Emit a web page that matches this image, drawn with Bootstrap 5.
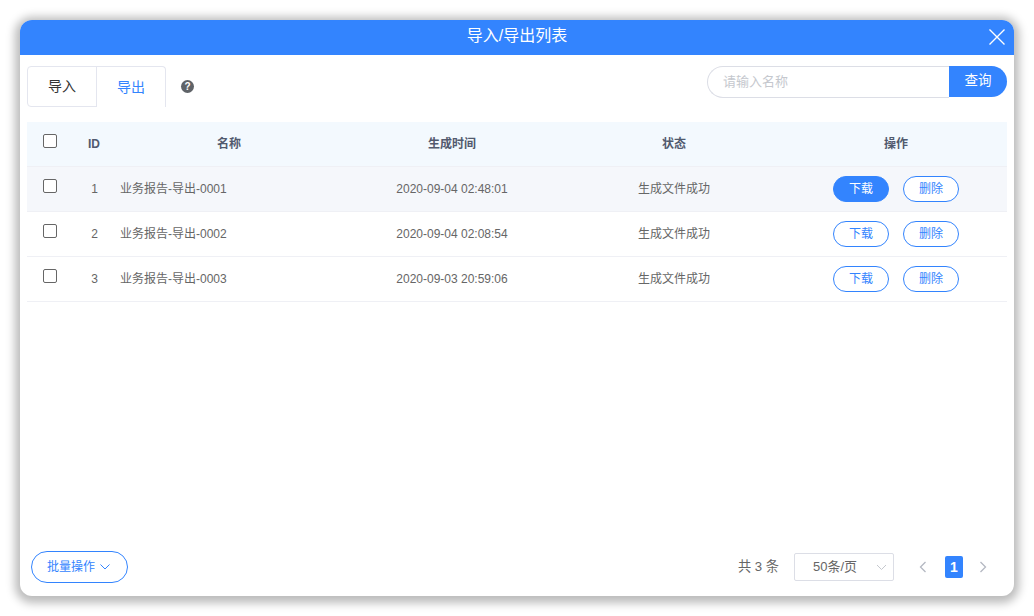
<!DOCTYPE html>
<html lang="zh">
<head>
<meta charset="utf-8">
<title>导入/导出列表</title>
<link rel="stylesheet" href="https://cdn.jsdelivr.net/npm/bootstrap@5.3.0/dist/css/bootstrap.min.css">
<style>
html,body{height:100%;margin:0;background:#fff;overflow:hidden}
body{font-family:"Liberation Sans","Noto Sans CJK SC",sans-serif;padding:20px;color:#666;font-size:12px}
.dlg{width:994px;height:576px;border-radius:12px;background:#fff;box-shadow:0 2px 10px 5px rgba(0,0,0,.27);overflow:hidden}
.dlg-head{height:35px;background:#3384fe;color:#fff;font-size:16px;line-height:32px}
.dlg-x{right:8px;top:8px;width:18px;height:18px;line-height:0}
.dlg-body{padding:11px 7px 13px}
.tabbar{height:41px}
.tabx{width:70px;height:41px;border:1px solid #e4e6ef;background:#fff;color:#333;font-size:14px;display:flex;align-items:center;justify-content:center}
.tabx.t1{border-radius:4px 0 0 4px}
.tabx.t2{margin-left:-1px;border-bottom:0;border-radius:0 4px 0 0;color:#3384fe}
.qmark{width:13px;height:13px;border-radius:50%;background:#5f6368;color:#fff;font-size:10px;font-weight:700;line-height:13px;text-align:center;margin-left:15px}
.srch{width:300px;height:32px;margin-top:0}
.srch-in{width:242px;height:32px;border:1px solid #dcdee6;border-right:0;border-radius:16px 0 0 16px;padding:0 15px 2px;font-size:13px;color:#333;outline:0;background:#fff}
.srch-in::placeholder{color:#c5c8ce}
.srch-btn{width:58px;height:31px;border:0;background:#3384fe;color:#fff;font-size:13.5px;border-radius:0 16px 16px 0;padding:0 0 1px}
.tbl-wrap{margin-top:15px;flex:1}
table.grid{width:980px;table-layout:fixed;border-collapse:collapse;margin:0}
.grid th,.grid td{padding:0;text-align:center;vertical-align:middle;border-bottom:1px solid #eff0f5;font-size:12px}
.grid th{height:44px;background:#f3f9fe;color:#515a6e;font-weight:700}
.grid td{height:45px;color:#666}
.grid tr.hot td{background:#f5f7fb}
.grid td.nm{text-align:left;padding-left:3px}
.grid td.idc{padding-left:1px}
.box{display:block;width:14px;height:14px;margin:0 0 5px 16px;border:1px solid #666;border-radius:2px;background:#fff;appearance:none}
.pill{width:56px;height:26px;padding:0;border:1px solid #3384fe;border-radius:13px;background:#fff;color:#3384fe;font-size:12px;line-height:24px}
.pill.on{background:#3384fe;color:#fff}
.ops{display:flex;justify-content:center;gap:14px;padding-right:0}
.bulk{width:97px;height:32px;margin-left:4px;border:1px solid #3384fe;border-radius:16px;background:#fff;color:#3384fe;font-size:12px;padding:0 1px 0 0}
.sel{width:100px;height:28px;border:1px solid #dcdee6;border-radius:2px;color:#666;font-size:13px;padding-left:18px;margin:0 0 0 15px}
.pgn{width:18px;height:22px;border-radius:2px;background:#3384fe;color:#fff;font-size:14px;font-weight:700;line-height:22px;text-align:center}
.total{font-size:13.2px;color:#666}
.foot{margin-top:auto;padding-right:20px}
.prevgap{margin-left:25px}
</style>
</head>
<body>
<div class="dlg d-flex flex-column">
  <div class="dlg-head position-relative text-center">导入/导出列表
    <span class="dlg-x position-absolute"><svg width="18" height="18" viewBox="0 0 18 18" fill="none" stroke="#fff" stroke-width="1.4"><path d="M1.5 1.5 16.5 16.5M16.5 1.5 1.5 16.5"/></svg></span>
  </div>
  <div class="dlg-body d-flex flex-column flex-grow-1">
    <div class="tabbar d-flex justify-content-between">
      <div class="d-flex align-items-center">
        <div class="tabx t1">导入</div>
        <div class="tabx t2">导出</div>
        <div class="qmark">?</div>
      </div>
      <div class="srch d-flex">
        <input class="srch-in" placeholder="请输入名称">
        <button class="srch-btn" type="button">查询</button>
      </div>
    </div>
    <div class="tbl-wrap">
      <table class="grid">
        <colgroup><col style="width:44px"><col style="width:46px"><col style="width:224px"><col style="width:222px"><col style="width:222px"><col style="width:222px"></colgroup>
        <thead><tr><th><input type="checkbox" class="box"></th><th>ID</th><th>名称</th><th>生成时间</th><th>状态</th><th>操作</th></tr></thead>
        <tbody>
          <tr class="hot"><td><input type="checkbox" class="box"></td><td class="idc">1</td><td class="nm">业务报告-导出-0001</td><td>2020-09-04 02:48:01</td><td>生成文件成功</td><td><div class="ops"><button class="pill on" type="button">下载</button><button class="pill" type="button">删除</button></div></td></tr>
          <tr><td><input type="checkbox" class="box"></td><td class="idc">2</td><td class="nm">业务报告-导出-0002</td><td>2020-09-04 02:08:54</td><td>生成文件成功</td><td><div class="ops"><button class="pill" type="button">下载</button><button class="pill" type="button">删除</button></div></td></tr>
          <tr><td><input type="checkbox" class="box"></td><td class="idc">3</td><td class="nm">业务报告-导出-0003</td><td>2020-09-03 20:59:06</td><td>生成文件成功</td><td><div class="ops"><button class="pill" type="button">下载</button><button class="pill" type="button">删除</button></div></td></tr>
        </tbody>
      </table>
    </div>
    <div class="d-flex justify-content-between align-items-center foot">
      <button class="bulk d-flex align-items-center justify-content-center gap-1" type="button">批量操作 <svg width="12" height="8" viewBox="0 0 12 8" fill="none" stroke="#3384fe" stroke-width="1"><path d="M1.5 1.5 6 6 10.5 1.5"/></svg></button>
      <div class="d-flex align-items-center">
        <span class="total">共 3 条</span>
        <div class="sel d-flex align-items-center position-relative">50条/页
          <svg class="position-absolute" style="right:6px;top:10px" width="11" height="7" viewBox="0 0 11 7" fill="none" stroke="#c5c8ce" stroke-width="1"><path d="M1 1 5.5 5.5 10 1"/></svg>
        </div>
        <svg class="prevgap" width="8" height="12" viewBox="0 0 8 12" fill="none" stroke="#b4b8c2" stroke-width="1.3"><path d="M6.5 1 1.5 6 6.5 11"/></svg>
        <div class="pgn" style="margin-left:18px">1</div>
        <svg style="margin-left:16px" width="8" height="12" viewBox="0 0 8 12" fill="none" stroke="#b4b8c2" stroke-width="1.3"><path d="M1.5 1 6.5 6 1.5 11"/></svg>
      </div>
    </div>
  </div>
</div>
<script src="https://cdn.jsdelivr.net/npm/bootstrap@5.3.0/dist/js/bootstrap.bundle.min.js"></script>
</body>
</html>
